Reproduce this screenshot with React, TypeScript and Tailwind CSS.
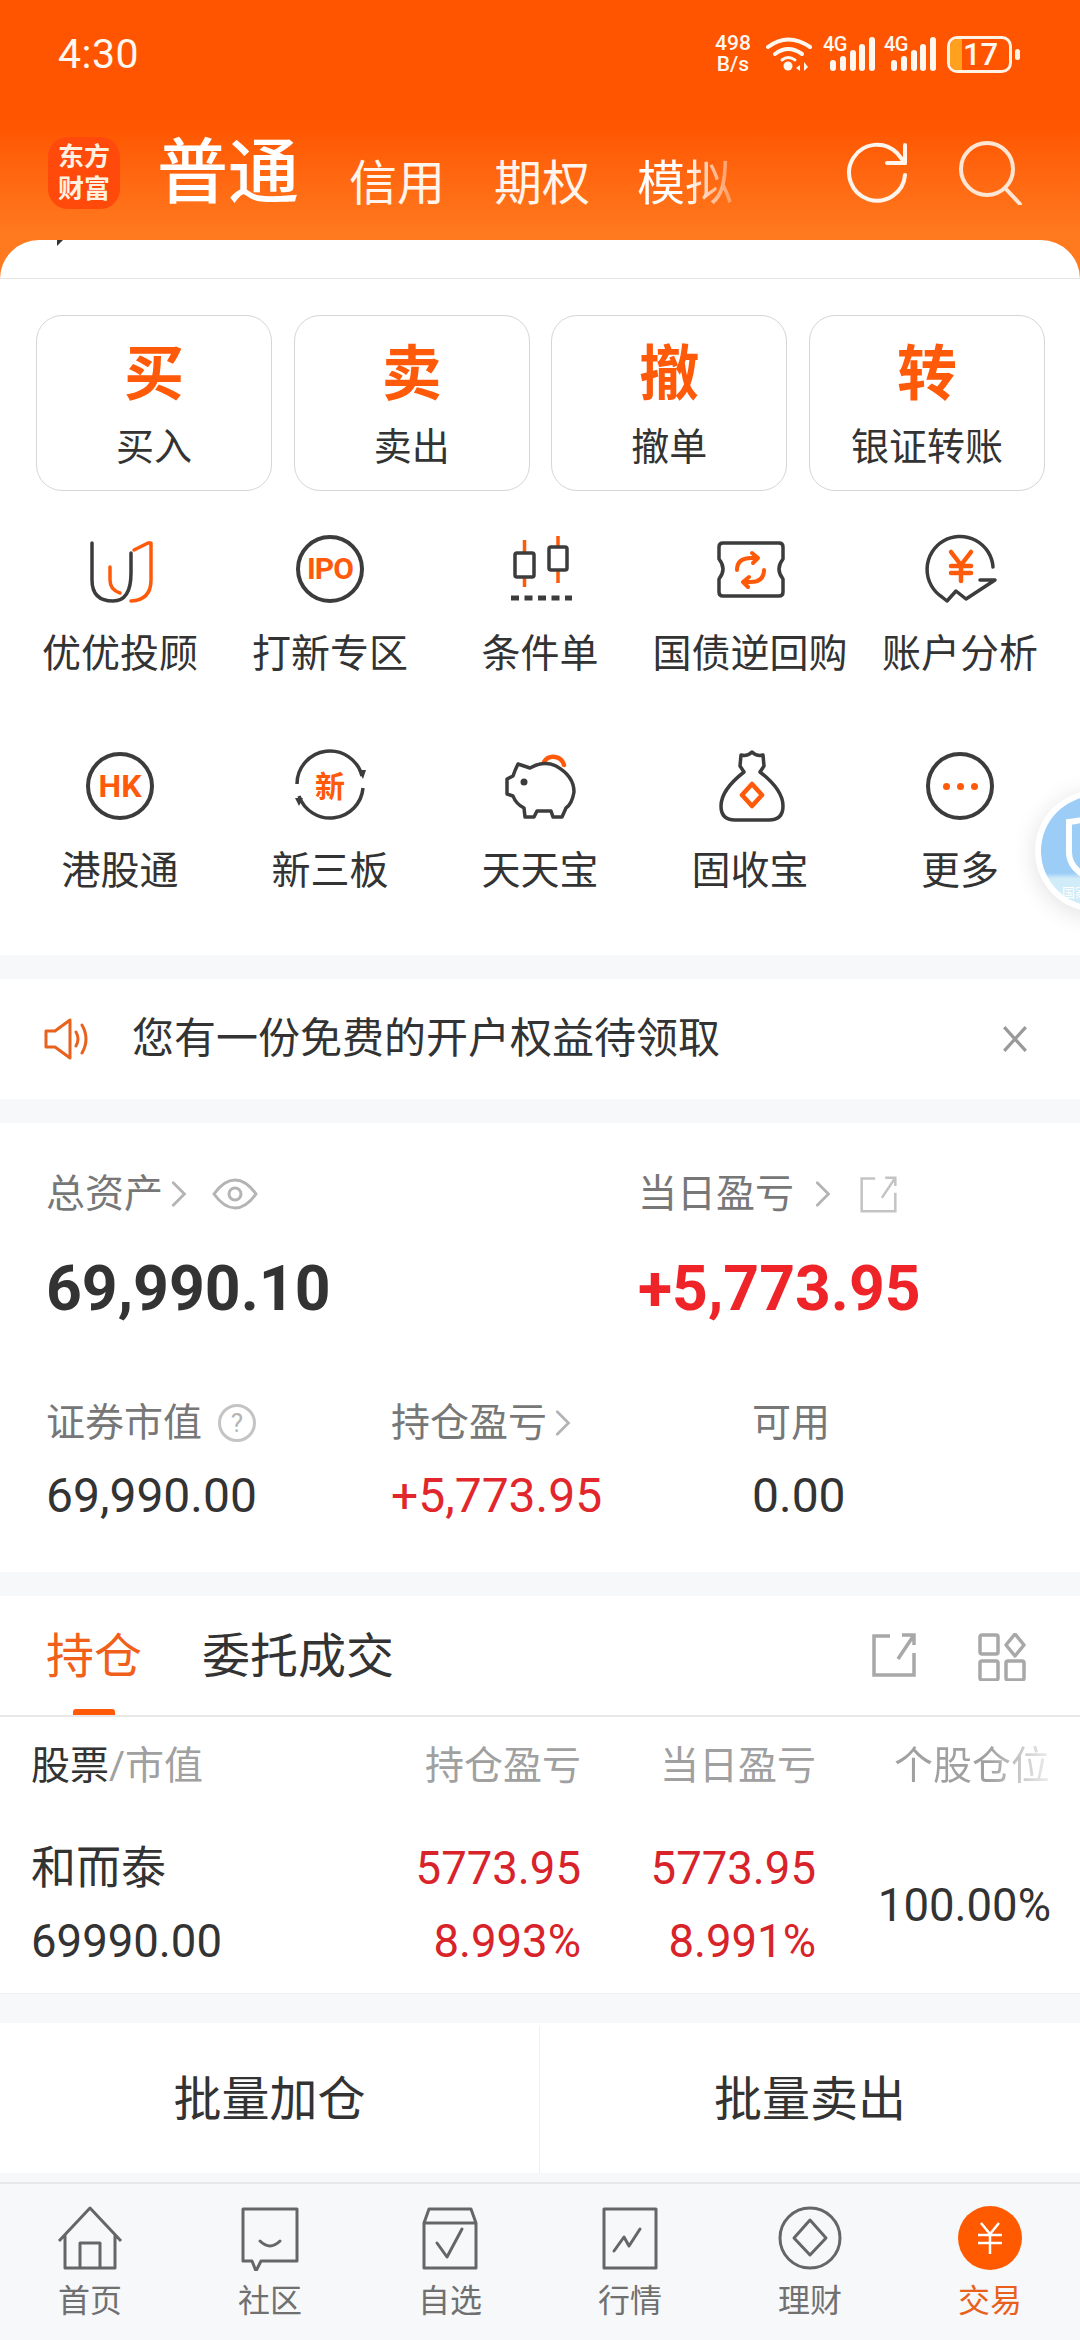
import React from "react";

const ORANGE = "#ff5a0a";
const DARK = "#3c3c3c";

function Wifi() {
  return (
    <svg width="46" height="36" viewBox="0 0 46 36" fill="none" stroke="#fff8f0" strokeLinecap="round">
      <path d="M2 11 Q22 -4 44 11" strokeWidth="4" />
      <path d="M9 18 Q22 8 36 18" strokeWidth="4" />
      <path d="M16 24 Q22 19 29 24" strokeWidth="3" />
      <circle cx="22" cy="30" r="4.5" fill="#fff8f0" stroke="none" />
      <path d="M34 29 L30 32 L34 35 Z M38 26 L42 31 L38 35 Z" fill="#fff8f0" stroke="none" />
    </svg>
  );
}

function Signal() {
  return (
    <div className="relative w-[52px] h-[36px]">
      <span className="absolute left-0 top-[-2px] text-[20px] leading-[20px] tracking-[-0.5px] font-medium text-[#fff8f0]">4G</span>
      <svg className="absolute inset-0" width="52" height="36" viewBox="0 0 52 36" fill="#fff8f0">
        <rect x="7" y="24" width="6" height="11" rx="3" />
        <rect x="17" y="20" width="6" height="15" rx="3" />
        <rect x="27" y="14" width="6" height="21" rx="3" />
        <rect x="36" y="8" width="6" height="27" rx="3" />
        <rect x="46" y="1" width="6" height="34" rx="3" />
      </svg>
    </div>
  );
}

function StatusBar() {
  return (
    <div className="h-[108px] flex items-center pl-[58px] pr-[60px] text-[#fff8f0]">
      <span className="text-[41px] leading-none tracking-[0.5px]">4:30</span>
      <div className="ml-auto flex items-center">
        <div className="w-[38px] text-[21px] leading-[21px] text-center font-medium">
          498
          <br />
          B/s
        </div>
        <div className="ml-[14px]">
          <Wifi />
        </div>
        <div className="ml-[11px]">
          <Signal />
        </div>
        <div className="ml-[9px]">
          <Signal />
        </div>
        <div className="ml-[11px] w-[65px] h-[37px] rounded-[10px] border-[3px] border-[#fff3e6] overflow-hidden flex">
          <div className="w-[12px] bg-[#ffa01e]" />
          <span className="flex-1 text-center text-[31px] leading-[31px] font-medium pr-[10px]">17</span>
        </div>
        <div className="ml-[3px] w-[5px] h-[11px] rounded-full bg-[#fff3e6]" />
      </div>
    </div>
  );
}

function NavBar() {
  return (
    <div className="mt-[25px] h-[80px] flex items-center pl-[48px] pr-[58px]">
      <div className="w-[72px] h-[72px] rounded-[20px] bg-[#ff4a0c] flex items-center justify-center text-center text-[#fff0e0] text-[26px] leading-[32px] font-bold">
        东方
        <br />
        财富
      </div>
      <div className="ml-[37px] flex items-end text-white">
        <span className="text-[71px] leading-[80px] font-medium">普通</span>
        <span className="ml-[50px] pb-[1px] text-[48px] leading-[56px] text-[#fff5ec]">信用</span>
        <span className="ml-[49px] pb-[1px] text-[48px] leading-[56px] text-[#fff5ec]">期权</span>
        <span className="ml-[47px] mb-[1px] text-[48px] leading-[56px] bg-gradient-to-r from-white from-50% to-white/30 bg-clip-text text-transparent">模拟</span>
      </div>
      <div className="ml-auto flex items-center gap-[49px]">
        <svg width="64" height="64" viewBox="0 0 64 64" fill="none" stroke="#fff5ec" strokeWidth="4" strokeLinecap="round" strokeLinejoin="round">
          <path d="M60 34 A28 28 0 1 1 52 12 L60 22" />
          <path d="M60 4 V22 H42" />
        </svg>
        <svg width="64" height="64" viewBox="0 0 64 64" fill="none" stroke="#ffe6d4" strokeWidth="4" strokeLinecap="round">
          <circle cx="29" cy="28" r="26" />
          <path d="M47 47 L62 63" />
        </svg>
      </div>
    </div>
  );
}

function TradeButton({ big, label }: { big: string; label: string }) {
  return (
    <div className="w-[236px] h-[176px] rounded-[26px] border border-[#d6d6d6] flex flex-col items-center">
      <span className="mt-[21px] text-[60px] leading-[76px] font-bold text-[#ff5a0a]">{big}</span>
      <span className="mt-[12px] text-[38px] leading-[44px] whitespace-nowrap text-[#333]">{label}</span>
    </div>
  );
}

function UIcon() {
  return (
    <svg width="80" height="80" viewBox="0 0 80 80" fill="none" strokeWidth="3.5" strokeLinecap="round" strokeLinejoin="round">
      <path d="M12 14 V51 Q12 72 33 72 Q51 72 51 44 V24" stroke={DARK} />
      <path d="M30 38 V51 Q30 61 40 64" stroke={ORANGE} />
      <path d="M54 21 L68 14 H71 V51 Q71 71 51 72" stroke={ORANGE} />
    </svg>
  );
}

function CircleIcon({ children }: { children: React.ReactNode }) {
  return (
    <div className="w-[68px] h-[68px] rounded-full border-[4px] border-[#3c3c3c] flex items-center justify-center text-[#ff5a0a] font-bold">
      {children}
    </div>
  );
}

function CandleIcon() {
  return (
    <svg width="80" height="80" viewBox="0 0 80 80" fill="none" strokeWidth="3.5">
      <path d="M24.5 11 V24 M24.5 48 V58 M58 7 V18 M58 41 V54" stroke={ORANGE} />
      <rect x="15" y="24" width="19" height="24" rx="2" stroke={DARK} />
      <rect x="49" y="18" width="18" height="23" rx="2" stroke={DARK} />
      <path d="M11 69 H72" stroke={DARK} strokeWidth="5" strokeDasharray="8 5.5" />
    </svg>
  );
}

function TicketIcon() {
  return (
    <svg width="80" height="80" viewBox="0 0 80 80" fill="none" strokeWidth="3.5" strokeLinecap="round" strokeLinejoin="round">
      <path d="M13 14 H69 Q73 14 73 18 V30 Q65 40 73 50 V63 Q73 67 69 67 H13 Q9 67 9 63 V50 Q17 40 9 30 V18 Q9 14 13 14 Z" stroke={DARK} />
      <path d="M27 41 Q27 29 41 29 L47 29 M42 24 L48 29 L43 34" stroke={ORANGE} strokeWidth="4" />
      <path d="M54 41 Q54 53 40 53 L34 53 M39 48 L33 53 L38 58" stroke={ORANGE} strokeWidth="4" />
    </svg>
  );
}

function YenIcon() {
  return (
    <svg width="80" height="80" viewBox="0 0 80 80" fill="none" strokeWidth="3.5" strokeLinejoin="round" strokeLinecap="round">
      <path d="M73 38 A33 33 0 1 0 22 68 L27 72 L36 62 L46 70 L75 51 L60 51" stroke={DARK} />
      <path d="M31 23 L41 36 L51 23 M41 36 V52 M31 37 H51 M31 44 H51" stroke={ORANGE} strokeWidth="4.5" />
    </svg>
  );
}

function NewIcon() {
  return (
    <svg width="80" height="80" viewBox="0 0 80 80" fill="none" strokeWidth="3.5">
      <path d="M7 38 A33 33 0 0 1 72 30" stroke={DARK} />
      <path d="M73 42 A33 33 0 0 1 9 50" stroke={DARK} />
      <path d="M68 24 L76 24 L73 33 Z M5 52 L13 52 L9 60 Z" fill={DARK} stroke="none" />
      <text x="40" y="51" textAnchor="middle" fontSize="30" fontWeight="700" fill={ORANGE}>新</text>
    </svg>
  );
}

function PigIcon() {
  return (
    <svg width="80" height="80" viewBox="0 0 80 80" fill="none" strokeWidth="3.5" strokeLinejoin="round" strokeLinecap="round">
      <path d="M44 16 A11 11 0 0 1 64 19" stroke={ORANGE} strokeWidth="4.5" />
      <path d="M18 18 L30 22 Q44 14 56 20 Q74 30 74 46 Q72 58 66 62 L62 71 H53 L51 65 H37 L34 71 H25 L24 62 Q16 58 13 50 L7 48 L7 33 L13 30 Q15 24 18 18 Z" stroke={DARK} />
      <circle cx="24" cy="36" r="3.5" fill={DARK} stroke="none" />
    </svg>
  );
}

function BagIcon() {
  return (
    <svg width="80" height="80" viewBox="0 0 80 80" fill="none" strokeWidth="3.5" strokeLinejoin="round">
      <path d="M31 9 Q37 11 42 6 Q47 11 53 9 L54 20 L50 26 Q73 44 73 60 Q73 74 59 74 H25 Q11 74 11 60 Q11 44 34 26 L30 20 Z" stroke={DARK} />
      <path d="M42 38 L52 49 L42 60 L32 49 Z" stroke={ORANGE} strokeWidth="4.5" />
    </svg>
  );
}

const quickRowOne = [
  { label: "优优投顾", icon: <UIcon /> },
  { label: "打新专区", icon: <CircleIcon><span className="text-[30px] leading-none tracking-[-1px]">IPO</span></CircleIcon> },
  { label: "条件单", icon: <CandleIcon /> },
  { label: "国债逆回购", icon: <TicketIcon /> },
  { label: "账户分析", icon: <YenIcon /> },
];

const quickRowTwo = [
  { label: "港股通", icon: <CircleIcon><span className="text-[32px] leading-none">HK</span></CircleIcon> },
  { label: "新三板", icon: <NewIcon /> },
  { label: "天天宝", icon: <PigIcon /> },
  { label: "固收宝", icon: <BagIcon /> },
  {
    label: "更多",
    icon: (
      <CircleIcon>
        <span className="flex gap-[7px]">
          <i className="w-[7px] h-[7px] rounded-full bg-[#ff5a0a]" />
          <i className="w-[7px] h-[7px] rounded-full bg-[#ff5a0a]" />
          <i className="w-[7px] h-[7px] rounded-full bg-[#ff5a0a]" />
        </span>
      </CircleIcon>
    ),
  },
];

function Chevron({ size = 24 }: { size?: number }) {
  return (
    <svg width={size * 0.6} height={size} viewBox="0 0 15 24" fill="none" stroke="#b4b4b4" strokeWidth="2.5" strokeLinecap="round">
      <path d="M2 2 L12 12 L2 22" />
    </svg>
  );
}

function ShareIcon({ size, color, width = 3 }: { size: number; color: string; width?: number }) {
  return (
    <svg width={size} height={size} viewBox="0 0 44 44" fill="none" stroke={color} strokeWidth={width}>
      <path d="M18 3 H2 V42 H42 V20" />
      <path d="M42 2 L26 26 M30 2 H42 V12" />
    </svg>
  );
}

function GridIcon() {
  return (
    <svg width="48" height="48" viewBox="0 0 48 48" fill="none" stroke="#a8a8a8" strokeWidth="3.5">
      <rect x="2" y="2" width="18" height="19" rx="2" />
      <rect x="2" y="28" width="18" height="19" rx="2" />
      <rect x="28" y="28" width="18" height="19" rx="2" />
      <path d="M37 1 L46 12 L37 23 L28 12 Z" strokeLinejoin="round" />
    </svg>
  );
}

function Badge() {
  return (
    <div className="absolute left-[1035px] top-[790px] w-[122px] h-[122px] rounded-full bg-white p-[6px] shadow-[0_4px_24px_rgba(0,0,0,0.12)]">
      <div className="relative w-full h-full rounded-full overflow-hidden bg-gradient-to-b from-[#9ccdf6] from-70% to-[#d0ecf8] to-75%">
        <svg className="absolute left-[24px] top-[16px]" width="60" height="70" viewBox="0 0 60 70" fill="none" stroke="#fff" strokeWidth="6">
          <path d="M4 10 Q22 8 34 2 Q46 8 64 10 V40 Q64 60 34 70 Q4 60 4 40 Z" />
        </svg>
        <span className="absolute left-[21px] top-[90px] whitespace-nowrap text-[13px] leading-[14px] text-white">国家</span>
      </div>
    </div>
  );
}

const tabs = [
  {
    label: "首页",
    icon: (
      <svg width="66" height="66" viewBox="0 0 66 66" fill="none" stroke="#666" strokeWidth="3" strokeLinejoin="round">
        <path d="M2 36 L33 3 L64 36 M8 30 V63 H58 V30 M23 63 V38 H43 V63" />
      </svg>
    ),
  },
  {
    label: "社区",
    icon: (
      <svg width="66" height="66" viewBox="0 0 66 66" fill="none" stroke="#666" strokeWidth="3" strokeLinejoin="round" strokeLinecap="round">
        <path d="M6 4 H60 V56 H24 L19 66 L15 56 H6 Z" />
        <path d="M23 36 Q33 46 43 36" />
      </svg>
    ),
  },
  {
    label: "自选",
    icon: (
      <svg width="66" height="66" viewBox="0 0 66 66" fill="none" stroke="#666" strokeWidth="3" strokeLinejoin="round" strokeLinecap="round">
        <path d="M7 18 L12 4 H54 L59 18 V63 H7 Z M7 18 H59" />
        <path d="M20 38 L30 52 L45 24" />
      </svg>
    ),
  },
  {
    label: "行情",
    icon: (
      <svg width="66" height="66" viewBox="0 0 66 66" fill="none" stroke="#666" strokeWidth="3" strokeLinejoin="round" strokeLinecap="round">
        <rect x="7" y="4" width="52" height="59" />
        <path d="M17 46 L27 32 L32 41 L43 24" />
      </svg>
    ),
  },
  {
    label: "理财",
    icon: (
      <svg width="66" height="66" viewBox="0 0 66 66" fill="none" stroke="#666" strokeWidth="3" strokeLinejoin="round">
        <circle cx="33" cy="33" r="30" />
        <path d="M33 15 L49 33 L33 50 L17 33 Z" />
      </svg>
    ),
  },
];

export default function App() {
  return (
    <div className="relative w-[1080px] h-[2340px] overflow-hidden bg-[#f7f8fa] font-['Roboto','Noto_Sans_CJK_SC',sans-serif] text-[#333]">
      {/* Orange header, the card's rounded corners sit on top of it */}
      <div className="bg-gradient-to-b from-[#ff5500] from-45% to-[#ff7a1e] to-85%">
        <StatusBar />
        <NavBar />
        <div className="mt-[27px] h-[39px] rounded-t-[44px] bg-white border-b border-[#e6e6e6] overflow-hidden pl-[57px]">
          <div className="w-0 h-0 border-r-[6px] border-r-transparent border-t-[6px] border-t-[#333]" />
        </div>
      </div>

      {/* Quick actions */}
      <div className="bg-white">
        <div className="flex justify-between pl-[36px] pr-[35px] pt-[36px]">
          <TradeButton big="买" label="买入" />
          <TradeButton big="卖" label="卖出" />
          <TradeButton big="撤" label="撤单" />
          <TradeButton big="转" label="银证转账" />
        </div>
        <div className="grid grid-cols-5 gap-y-[70px] px-[15px] pt-[38px] pb-[62px]">
          {[...quickRowOne, ...quickRowTwo].map((item) => (
            <div key={item.label} className="flex flex-col items-center">
              <div className="h-[80px] flex items-center justify-center">{item.icon}</div>
              <span className="mt-[23px] text-[39px] leading-[44px] whitespace-nowrap">{item.label}</span>
            </div>
          ))}
        </div>
      </div>

      {/* Notice */}
      <div className="mt-[24px] h-[120px] bg-white flex items-center pl-[43px] pr-[52px]">
        <svg width="48" height="42" viewBox="0 0 46 42" fill="none" stroke="#e8621e" strokeWidth="3" strokeLinejoin="round" strokeLinecap="round">
          <path d="M2 13 H11 L26 2 V40 L11 29 H2 Z" />
          <path d="M32 14 Q36 21 32 28 M38 7 Q46 21 38 35" />
        </svg>
        <span className="ml-[41px] text-[42px] leading-[50px]">您有一份免费的开户权益待领取</span>
        <svg className="ml-auto" width="26" height="28" viewBox="0 0 24 26" fill="none" stroke="#999" strokeWidth="3">
          <path d="M2 2 L22 24 M22 2 L2 24" />
        </svg>
      </div>

      {/* Assets */}
      <div className="mt-[24px] h-[449px] bg-white pt-[49px] pl-[46px]">
        <div className="flex items-center h-[44px] text-[39px] leading-[44px] text-[#777]">
          <div className="w-[592px] flex items-center">
            <span>总资产</span>
            <span className="ml-[8px]"><Chevron size={28} /></span>
            <svg className="ml-[24px]" width="46" height="32" viewBox="0 0 46 32" fill="none" stroke="#b4b4b4" strokeWidth="3">
              <path d="M2 16 Q12 2 23 2 Q34 2 44 16 Q34 30 23 30 Q12 30 2 16 Z" />
              <circle cx="23" cy="16" r="6" />
            </svg>
          </div>
          <span>当日盈亏</span>
          <span className="ml-[21px]"><Chevron size={28} /></span>
          <span className="ml-[28px]"><ShareIcon size={37} color="#c4c4c4" /></span>
        </div>
        <div className="mt-[37px] flex text-[62.5px] leading-[72px] font-bold">
          <span className="w-[592px] text-[#333]">69,990.10</span>
          <span className="text-[#ee2428]">+5,773.95</span>
        </div>
        <div className="mt-[76px] flex items-center h-[44px] text-[39px] leading-[44px] text-[#777]">
          <div className="w-[345px] flex items-center">
            <span>证券市值</span>
            <span className="ml-[16px] w-[38px] h-[38px] rounded-full border-[3px] border-[#c4c4c4] text-[#b4b4b4] text-[26px] leading-[32px] text-center">?</span>
          </div>
          <div className="w-[361px] flex items-center">
            <span>持仓盈亏</span>
            <span className="ml-[8px]"><Chevron size={28} /></span>
          </div>
          <span>可用</span>
        </div>
        <div className="mt-[23px] flex text-[48px] leading-[56px]">
          <span className="w-[345px]">69,990.00</span>
          <span className="w-[361px] text-[#e1262c]">+5,773.95</span>
          <span>0.00</span>
        </div>
      </div>

      {/* Holdings */}
      <div className="mt-[24px] bg-white border-b border-[#eeeeee]">
        <div className="flex border-b-2 border-[#e8e8e8] pl-[46px] pr-[54px]">
          <div className="flex flex-col items-center pt-[33px]">
            <span className="text-[48px] leading-[56px] text-[#f0601a]">持仓</span>
            <span className="mt-[24px] w-[42px] h-[6px] rounded-t-[3px] bg-[#ff5a0a]" />
          </div>
          <span className="ml-[60px] pt-[33px] text-[48px] leading-[56px]">委托成交</span>
          <div className="ml-auto flex items-start pt-[37px] gap-[62px]">
            <ShareIcon size={44} color="#a8a8a8" width={3.5} />
            <GridIcon />
          </div>
        </div>
        <div className="flex pl-[31px] pt-[27px] text-[39px] leading-[44px] text-[#a0a0a0]">
          <span className="w-[349px]">
            <span className="text-[#333]">股票</span>/市值
          </span>
          <span className="w-[201px] text-right">持仓盈亏</span>
          <span className="w-[235px] text-right">当日盈亏</span>
          <span className="w-[234px] text-right">
            <span className="bg-gradient-to-r from-[#a0a0a0] from-60% to-[#eeeeee] bg-clip-text text-transparent">个股仓位</span>
          </span>
        </div>
        <div className="flex items-center pl-[31px] mt-[53px] pb-[23px] text-[45.5px] leading-[56px]">
          <div className="w-[349px] flex flex-col gap-[17px]">
            <span className="text-[45px]">和而泰</span>
            <span>69990.00</span>
          </div>
          <div className="w-[201px] flex flex-col gap-[17px] text-right text-[#d8232a]">
            <span>5773.95</span>
            <span>8.993%</span>
          </div>
          <div className="w-[235px] flex flex-col gap-[17px] text-right text-[#d8232a]">
            <span>5773.95</span>
            <span>8.991%</span>
          </div>
          <span className="w-[235px] text-right">100.00%</span>
        </div>
      </div>

      {/* Batch actions */}
      <div className="mt-[29px] h-[150px] pt-[3px] bg-white flex text-[48px] leading-[56px]">
        <div className="w-[540px] border-r border-[#f0f0f0] flex items-center justify-center">批量加仓</div>
        <div className="flex-1 flex items-center justify-center">批量卖出</div>
      </div>

      {/* Tab bar */}
      <div className="mt-[9px] border-t-2 border-[#e8e8ea] grid grid-cols-6 pt-[21px]">
        {tabs.map((tab) => (
          <div key={tab.label} className="flex flex-col items-center">
            <div className="h-[66px]">{tab.icon}</div>
            <span className="mt-[10px] text-[32px] leading-[40px] text-[#707070]">{tab.label}</span>
          </div>
        ))}
        <div className="flex flex-col items-center">
          <div className="h-[66px] flex items-center">
            <div className="w-[64px] h-[64px] rounded-full bg-[#ff5a00] flex items-center justify-center">
              <svg width="28" height="32" viewBox="0 0 28 32" fill="none" stroke="#fff" strokeWidth="2.5">
                <path d="M5 1 L14 12 L23 1 M14 12 V32 M2 13 H26 M2 21 H26" />
              </svg>
            </div>
          </div>
          <span className="mt-[10px] text-[32px] leading-[40px] text-[#e8601c]">交易</span>
        </div>
      </div>

      <Badge />
    </div>
  );
}
